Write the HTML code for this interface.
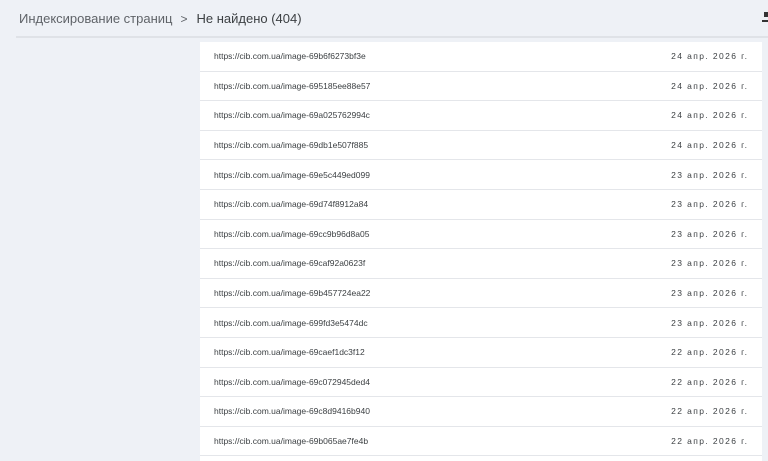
<!DOCTYPE html><html><head><style>
html,body{margin:0;width:768px;height:461px;overflow:hidden}
body{background:#eef1f6;font-family:"Liberation Sans",sans-serif;position:relative}
.h{position:absolute;top:11px;left:19px;font-size:13px;color:#5f6368}
.h b{font-weight:normal;color:#3c4043;margin-left:4px}
.h span{margin:0 5px 0 8px;font-size:12px}
.line{position:absolute;top:36px;left:16px;right:0;height:2px;background:#dfe2e7}
.dl{position:absolute;top:12px;left:762px;width:8px;height:8px;border-bottom:2px solid #333;background:linear-gradient(#333,#333) 2px 0/4px 5px no-repeat}
.t{position:absolute;top:42px;left:200px;width:562px;background:#fff}
.r{height:29.6px;box-sizing:border-box;border-bottom:1px solid #e4e6ea;display:flex;justify-content:space-between;align-items:center;padding:0 15px 0 14px;font-size:8.5px;color:#3c4043}
.r div+div{letter-spacing:1.4px;margin-right:-1.4px}
</style></head><body>
<div class="h">Индексирование страниц<span>&gt;</span><b>Не найдено (404)</b></div>
<div class="dl"></div>
<div class="line"></div>
<div class="t">
<div class="r"><div>https://cib.com.ua/image-69b6f6273bf3e</div><div>24 апр. 2026 г.</div></div>
<div class="r"><div>https://cib.com.ua/image-695185ee88e57</div><div>24 апр. 2026 г.</div></div>
<div class="r"><div>https://cib.com.ua/image-69a025762994c</div><div>24 апр. 2026 г.</div></div>
<div class="r"><div>https://cib.com.ua/image-69db1e507f885</div><div>24 апр. 2026 г.</div></div>
<div class="r"><div>https://cib.com.ua/image-69e5c449ed099</div><div>23 апр. 2026 г.</div></div>
<div class="r"><div>https://cib.com.ua/image-69d74f8912a84</div><div>23 апр. 2026 г.</div></div>
<div class="r"><div>https://cib.com.ua/image-69cc9b96d8a05</div><div>23 апр. 2026 г.</div></div>
<div class="r"><div>https://cib.com.ua/image-69caf92a0623f</div><div>23 апр. 2026 г.</div></div>
<div class="r"><div>https://cib.com.ua/image-69b457724ea22</div><div>23 апр. 2026 г.</div></div>
<div class="r"><div>https://cib.com.ua/image-699fd3e5474dc</div><div>23 апр. 2026 г.</div></div>
<div class="r"><div>https://cib.com.ua/image-69caef1dc3f12</div><div>22 апр. 2026 г.</div></div>
<div class="r"><div>https://cib.com.ua/image-69c072945ded4</div><div>22 апр. 2026 г.</div></div>
<div class="r"><div>https://cib.com.ua/image-69c8d9416b940</div><div>22 апр. 2026 г.</div></div>
<div class="r"><div>https://cib.com.ua/image-69b065ae7fe4b</div><div>22 апр. 2026 г.</div></div>
<div class="r"><div></div><div></div></div>
</div>
</body></html>
